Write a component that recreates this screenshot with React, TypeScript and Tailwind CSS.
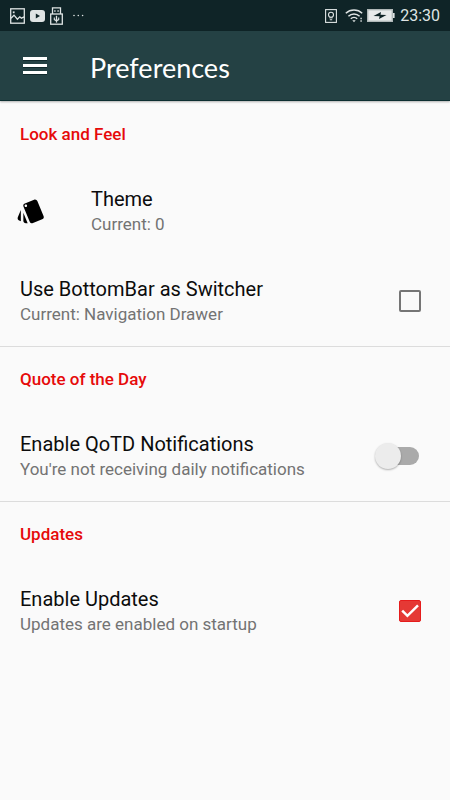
import { useState } from "react";
import type { ReactNode } from "react";
import { MdStyle } from "react-icons/md";

// Status bar on top of the app
function StatusBar() {
  return (
    <div className="flex h-[31px] items-center justify-between bg-[#0f2427] px-2.5 text-[#dfe4e4]">
      <div className="flex items-center gap-[5px]">
        {/* Picture */}
        <svg width="15" height="16" viewBox="0 0 15 16" fill="none" stroke="currentColor" strokeWidth="1.3">
          <rect x="0.7" y="0.8" width="13.6" height="14.4" />
          <path d="M1 10.2l3-3 3.4 4 2.4-2.4 1.6 1.4 2.8-1.4" />
          <path d="M2.8 4.3h1.8" strokeWidth="1.8" />
        </svg>
        {/* Video */}
        <svg width="15" height="12" viewBox="0 0 15 12">
          <rect width="15" height="12" rx="3" fill="currentColor" />
          <path d="M5.8 3.4v5.2L10 6z" fill="#0f2427" />
        </svg>
        {/* USB */}
        <svg width="13" height="18" viewBox="0 0 13 18" fill="none" stroke="currentColor" strokeWidth="1.3">
          <path d="M2.5 7V.8h8V7" />
          <rect x="0.7" y="7" width="11.6" height="10.2" />
          <path d="M4.2 4h1.4M7.4 4h1.4" strokeWidth="1.4" />
          <path d="M6.5 8.8v6.8" />
          <path d="M4.3 10.6v2l2.2 1.2 2.2-1.2v-2" strokeWidth="1.1" />
        </svg>
        <svg className="ml-1" width="13" height="3" viewBox="0 0 13 3" fill="currentColor">
          <circle cx="2" cy="1.5" r="0.8" />
          <circle cx="6.3" cy="1.5" r="0.8" />
          <circle cx="10.6" cy="1.5" r="0.8" />
        </svg>
      </div>
      <div className="flex items-center">
        {/* Eye comfort */}
        <svg width="12" height="14" viewBox="0 0 12 14" fill="none" stroke="currentColor" strokeWidth="1.1">
          <rect x="0.6" y="0.6" width="10.8" height="12.8" />
          <circle cx="6" cy="5.8" r="2.5" />
          <path d="M5.1 8v1.4M6.9 8v1.4M4.8 10.8h2.4" />
        </svg>
        {/* Wifi */}
        <svg className="ml-2" width="19" height="15" viewBox="0 0 19 15" fill="none" stroke="currentColor" strokeWidth="1.5">
          <path d="M0.8 5.3a12 12 0 0 1 16.4 0" />
          <path d="M3.4 8.2a8 8 0 0 1 11.2 0" />
          <path d="M5.8 10.8a4.6 4.6 0 0 1 6.4 0" />
          <path d="M7.3 12.3h3.4L9 14.3z" fill="currentColor" stroke="none" />
          <path d="M15.4 10.5h1.4M15.4 13h1.4" strokeWidth="1.3" />
        </svg>
        {/* Battery */}
        <svg className="ml-[3px]" width="28" height="13" viewBox="0 0 28 13">
          <rect x="0.7" y="0.7" width="24.6" height="11.6" fill="#e8ebeb" stroke="#b0b8b8" strokeWidth="1.4" />
          <rect x="26" y="4" width="1.6" height="5" fill="currentColor" />
          <path d="M6.5 7l7.5-4-.5 2.8 6 .1-7.5 4.1.6-2.8z" fill="#0f2427" />
        </svg>
        <span className="ml-[5px] text-base leading-6">23:30</span>
      </div>
    </div>
  );
}

function Category({ title, children }: { title: string; children: ReactNode }) {
  return (
    <section className="border-b border-[#dcdcdc] last:border-b-0">
      <h2 className="px-5 py-5 text-[17px] leading-6 font-medium text-[#e60a0a]">{title}</h2>
      {children}
    </section>
  );
}

function Labels({ title, summary }: { title: string; summary: string }) {
  return (
    <span className="block flex-1 pt-0.5">
      <span className="block text-xl leading-[25px] text-[#0c0c0c]">{title}</span>
      <span className="block text-[17px] leading-[25px] text-[#737373]">{summary}</span>
    </span>
  );
}

type ToggleProps = {
  title: string;
  summary: string;
  checked: boolean;
  onChange: (checked: boolean) => void;
};

function CheckboxRow({ title, summary, checked, onChange }: ToggleProps) {
  return (
    <label className="flex items-center py-[19px] pr-[29px] pl-5">
      <Labels title={title} summary={summary} />
      <span className="grid">
        <input
          type="checkbox"
          checked={checked}
          onChange={(e) => onChange(e.target.checked)}
          className="peer col-start-1 row-start-1 size-[22px] appearance-none rounded-xs border-2 border-[#757575] checked:border checked:border-[#e51c1c] checked:bg-[#e53935]"
        />
        <svg
          className="pointer-events-none invisible col-start-1 row-start-1 peer-checked:visible"
          width="22"
          height="22"
          viewBox="0 0 22 22"
          fill="none"
          stroke="#fff"
          strokeWidth="2.5"
        >
          <path d="M3.2 10.6l5.2 5.2L19 5.4" />
        </svg>
      </span>
    </label>
  );
}

function SwitchRow({ title, summary, checked, onChange }: ToggleProps) {
  return (
    <label className="flex items-center py-[19px] pr-[31px] pl-5">
      <Labels title={title} summary={summary} />
      <input
        type="checkbox"
        role="switch"
        checked={checked}
        onChange={(e) => onChange(e.target.checked)}
        className="flex h-[18px] w-[42px] appearance-none items-center rounded-full bg-[#aaaaaa] before:-ml-0.5 before:size-[26px] before:rounded-full before:bg-[#ececec] before:shadow-[0_1px_2px_rgba(0,0,0,0.3)] checked:justify-end checked:bg-[#f29c9a] checked:before:bg-[#e53935]"
      />
    </label>
  );
}

export default function App() {
  const [bottomBar, setBottomBar] = useState(false);
  const [quotes, setQuotes] = useState(false);
  const [updates, setUpdates] = useState(true);

  return (
    <div className="min-h-screen bg-[#fafafa] font-['Roboto',sans-serif]">
      <StatusBar />

      {/* Toolbar */}
      <header className="flex h-[70px] items-center border-b border-[#0d2f31] bg-[#244144] pl-[23px] text-white shadow-[0_1px_2px_rgba(0,0,0,0.3)]">
        <button type="button" aria-label="Open menu">
          <svg width="24" height="18" viewBox="0 0 24 18">
            <path d="M0 3h24v1H0zM0 10h24v1H0zM0 17h24v1H0z" fill="#10292c" />
            <path d="M0 0h24v3H0zM0 7h24v3H0zM0 14h24v3H0z" fill="#fff" />
          </svg>
        </button>
        <h1 className="ml-[43px] pt-1 font-['Lato',sans-serif] text-[27px] leading-8">Preferences</h1>
      </header>

      <main className="pt-px">
        <Category title="Look and Feel">
          <button type="button" className="flex w-full items-center py-[19px] pr-5 pl-4 text-left">
            <MdStyle size={30} className="text-black" />
            <span className="ml-[45px] block flex-1">
              <Labels title="Theme" summary="Current: 0" />
            </span>
          </button>
          <CheckboxRow
            title="Use BottomBar as Switcher"
            summary="Current: Navigation Drawer"
            checked={bottomBar}
            onChange={setBottomBar}
          />
        </Category>

        <Category title="Quote of the Day">
          <SwitchRow
            title="Enable QoTD Notifications"
            summary="You're not receiving daily notifications"
            checked={quotes}
            onChange={setQuotes}
          />
        </Category>

        <Category title="Updates">
          <CheckboxRow
            title="Enable Updates"
            summary="Updates are enabled on startup"
            checked={updates}
            onChange={setUpdates}
          />
        </Category>
      </main>
    </div>
  );
}
